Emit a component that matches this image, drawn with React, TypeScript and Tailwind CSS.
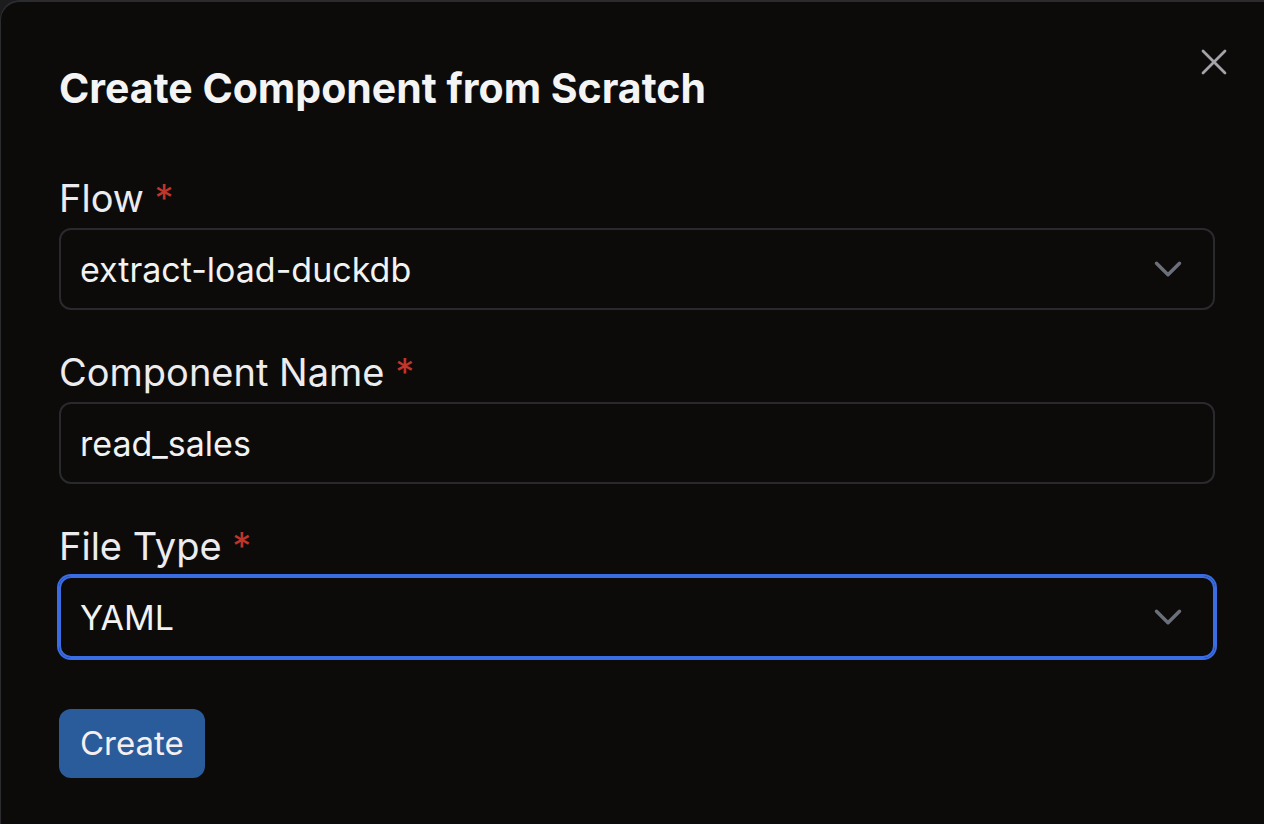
import { X, ChevronDown } from 'lucide-react';

const fields = [
  { id: 'flow', label: 'Flow', value: 'extract-load-duckdb', select: true, focused: false },
  { id: 'name', label: 'Component Name', value: 'read_sales', select: false, focused: false },
  { id: 'type', label: 'File Type', value: 'YAML', select: true, focused: true },
];

export default function App() {
  return (
    <div className="h-screen w-full overflow-hidden bg-[#1c1c1f] font-['Inter',sans-serif]">
      <div className="relative h-full w-full rounded-tl-[20px] border-l border-t-2 border-[#2c2c30] bg-[#0c0b0a] pl-[58px] pr-[49px] pt-[62px]">
        <button className="absolute right-[28px] top-[38px] text-[#a3a3a8]">
          <X size={44} strokeWidth={1.5} />
        </button>

        <h2 className="text-[41px] font-bold leading-[48px] text-[#f4f4f5]">
          Create Component from Scratch
        </h2>

        <div className="mt-[63px] flex flex-col gap-[39px]">
          {fields.map((f) => (
            <div key={f.id} className="flex flex-col gap-[7px]">
              <label className="text-[38px] leading-[46px] text-[#ececee]">
                {f.label} <span className="text-[#c2352a]">*</span>
              </label>
              <div
                className={
                  f.focused
                    ? 'flex h-[82px] items-center justify-between rounded-[12px] border-2 border-[#3a6de3] pl-[19px] pr-[22px] ring-2 ring-[#3a6de3]'
                    : 'flex h-[82px] items-center justify-between rounded-[12px] border-2 border-[#2a2a2e] pl-[19px] pr-[22px]'
                }
              >
                <span className="text-[34px] text-[#f2f2f3]">{f.value}</span>
                {f.select && <ChevronDown size={46} strokeWidth={1.8} className="text-[#6b6f7a]" />}
              </div>
            </div>
          ))}
        </div>

        <button className="mt-[51px] h-[69px] rounded-[12px] bg-[#2a5b9b] px-[21px] text-[33px] text-[#f7eeee]">
          Create
        </button>
      </div>
    </div>
  );
}
